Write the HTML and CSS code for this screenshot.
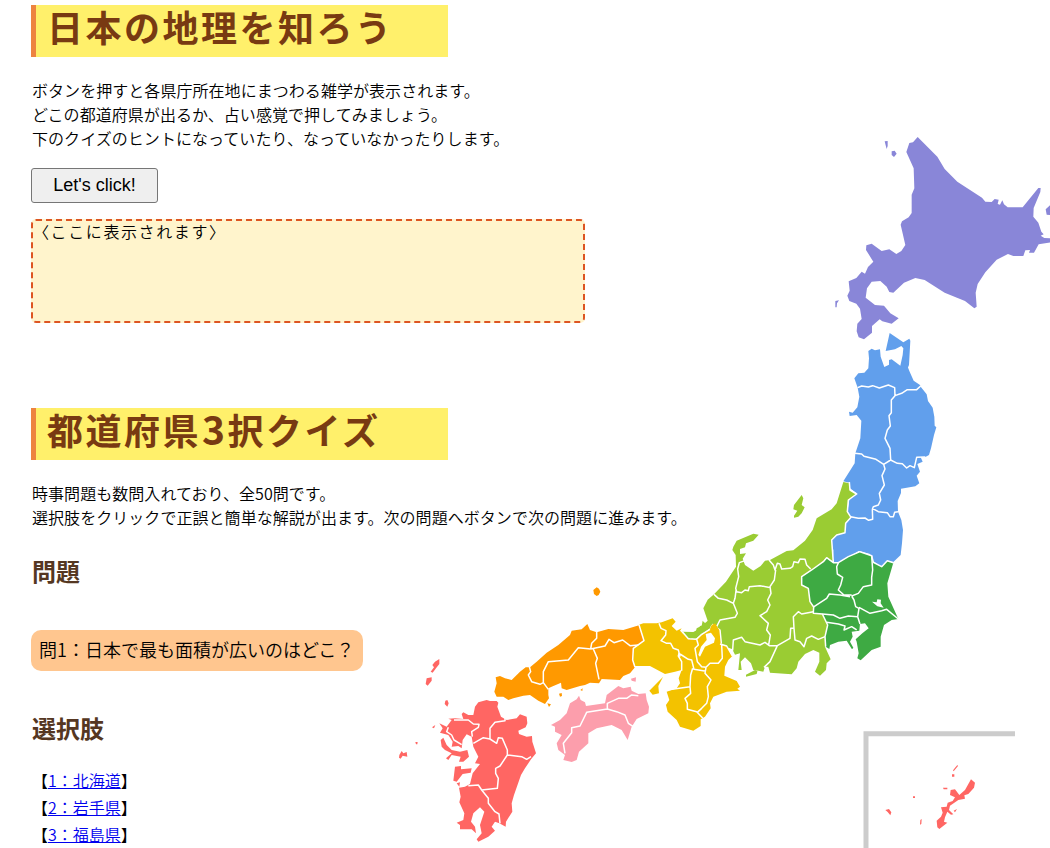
FILE: index.html
```html
<!DOCTYPE html>
<html lang="ja">
<head>
<meta charset="utf-8">
<title>日本の地理を知ろう</title>
<link rel="stylesheet" href="styles.css">
</head>
<body>
<div class="page">
<svg class="map" viewBox="0 0 1050 848" aria-hidden="true">
  <!-- 北海道 -->
  <g class="hokkaido" transform="translate(820 120) scale(.33333)">
    <path d="M293 51L352 110 374 147 412 185 486 233 496 245 515 246 524 237 536 239 533 252 540 254 547 241 552 253 563 262 608 262 655 204 662 204 661 216 641 264 640 290 655 308 664 335 671 343 662 347 673 354 692 355 692 367 656 373 642 398 627 398 630 390 616 391 610 408 580 408 564 402 530 419 496 457 473 492 467 518 470 560 463 565 435 543 374 518 314 480 286 474 252 488 220 518 208 516 200 500 181 483 155 485 141 505 137 533 165 555 192 557 211 580 236 595 215 611 187 604 179 598 156 618 156 638 132 658 116 652 110 634 112 611 125 597 120 566 109 551 88 543 82 527 89 512 86 484 109 474 125 455 135 461 144 441 160 425 138 390 139 376 155 371 185 393 208 388 229 402 244 393 256 375 242 314 246 304 266 292 275 279 275 224 283 205 281 145 259 96 268 69 279 67Z"/>
    <path d="M194 64L203 63 203 78 200 87 197 76ZM215 94L224 92 230 101 222 111 215 105ZM692 254L677 268 680 284 692 285ZM46 543L57 541 51 550 50 562 46 562Z"/>
  </g>
  <!-- 東北 -->
  <g class="tohoku" transform="translate(820 320) scale(.33333)">
    <path d="M209 39L250 67 268 56 271 62 267 135 258 157 258 148 263 140 269 155 281 182 300 195 302 200 320 223 324 243 338 263 343 290 344 317 349 322 342 345 333 385 327 405 316 411 302 412 308 425 292 432 300 455 290 467 298 490 286 499 243 506 243 519 233 543 234 575 244 600 249 630 246 670 242 705 220 726 200 722 184 740 158 722 150 702 116 693 56 729 39 725 40 690 32 670 36 650 72 635 76 612 92 593 82 575 88 540 110 520 90 505 88 488 70 484 104 430 106 400 121 355 124 302 110 285 89 288 87 275 98 278 112 262 118 230 113 203 103 175 115 160 133 158 145 145 147 115 145 93 155 86 165 91 180 88 182 110 193 141 207 134 207 120 215 118 241 137 248 105 250 85 244 78 225 88 197 93Z"/>
    <path class="border" d="M113 203L125 198 145 201 158 197 178 204 205 195 224 203 225 227 245 220 262 209 290 209 302 198M225 227L214 240 214 278 207 287 211 318 202 330 195 355 210 385 212 420 191 433M104 400L125 402 132 409 168 418 191 433M212 420L232 430 247 431 260 444 270 437 283 443 290 412 316 411M191 433L195 447 186 467 193 495 178 520 182 540 175 555 160 560 157 568M157 565L175 575 202 578 210 590 220 590 224 577 234 575M157 568L158 598 146 601 135 594 115 595 92 590"/>
  </g>
  <!-- 中部・関東 -->
  <g transform="translate(690 470) scale(.33333)">
    <path class="chubu" d="M460 36L440 100 425 118 380 145 368 180 345 212 310 241 290 243 240 270 225 272 212 288 190 302 165 285 158 266 168 250 150 252 150 237 165 232 168 220 190 212 206 194 190 191 140 212 130 230 127 240 137 255 138 290 108 335 72 373 53 389 40 415 53 452 45 460 38 452 35 467 20 475 17 487 0 490 0 508 30 495 67 463 90 480 95 525 128 540 135 554 150 550 148 570 145 600 155 600 152 575 165 562 183 580 190 600 203 600 200 612 168 620 168 614 195 600 220 605 225 590 235 590 240 608 305 613 320 595 325 575 345 552 370 540 388 548 388 575 375 605 390 617 408 600 410 580 422 568 405 530 408 500 413 465 397 432 370 430 371 411 360 395 355 355 335 345 335 320 365 300 400 275 410 263 430 275 425 210 440 195 465 188 467 160 483 142 472 125 475 90 500 72 480 60 478 40Z"/>
    <path class="chubu" d="M335 75L340 85 335 105 344 112 335 130 325 140 312 143 312 137 322 122 310 118 312 105Z"/>
    <path class="kanto" d="M410 263L430 278 445 278 475 260 510 245 545 257 550 277 575 290 592 272 610 278 592 340 595 380 625 447 605 450 582 465 572 500 572 530 545 540 512 571 502 565 506 550 500 515 497 508 517 490 536 475 525 460 510 462 508 482 485 485 488 500 480 515 490 533 486 538 470 512 445 515 420 525 418 537 407 530 405 500 413 465 397 432 370 430 371 411 360 395 355 355 335 345 335 320 365 300 400 275Z"/>
    <path class="border" d="M478 36L480 60 500 72 475 90 472 125 483 142 467 160 465 188 440 195 425 210 430 278M407 530L405 500 413 465 397 432 370 430 371 411 360 395 355 355 335 345 335 320 365 300 400 275 410 263 430 278 445 278 475 260 510 245 545 257 550 277 575 290 592 272 610 278"/>
    <path class="border" d="M445 278L440 290 442 312 458 322 452 345 445 360 462 375 485 375M545 257L548 300 545 322 545 345 520 350 505 370 485 378M371 411L410 385 418 372 450 375 480 380M485 378L492 390 497 410 507 415 503 440 510 462M507 412L540 430 575 422 590 418 625 447M397 432L430 435 450 445 475 438 503 440M410 457L445 462 465 468 462 480 485 470 500 480"/>
    <path class="border" d="M237 270L250 285 255 300 262 280 270 282 275 297 300 295 308 290 312 275 325 278 330 267 345 268 350 285 362 297M257 300L253 330 240 350 243 370 233 390 240 405 230 425 210 437 235 460 230 480 241 495 236 525M165 272L148 278 143 297 146 320 137 355 140 365 155 368 165 360 175 362 178 350 210 347 242 353M138 362L135 385 130 400 110 390 85 385 72 373M130 400L142 430 135 442 90 450 80 470 67 463M67 463L90 480 95 530 128 540 130 510 155 502 165 515 210 525 225 517 238 527 262 527M262 527L240 575 222 592M262 527L300 505 302 475 312 475 315 510 330 515 342 530 350 505 365 498 385 508 405 500M312 475L310 440 325 425 335 432 370 425"/>
    <path class="water" d="M546 395L560 397 562 388 573 389 572 400 581 413 562 409Z"/>
  </g>
  <!-- 近畿・中国・四国 -->
  <g transform="translate(480 580) scale(.33333)">
    <path class="chubu" d="M607 155L640 156 658 146 660 138 675 135 672 128 695 130 690 145 665 163 645 178 615 172Z"/>
    <path class="kinki" d="M477 134L490 130 530 130 545 127 578 115 587 125 575 138 590 152 605 145 600 152 625 176 650 178 665 165 690 147 695 135 705 130 718 150 722 190 740 198 757 228 745 240 735 260 733 287 770 303 780 320 772 326 780 332 740 335 700 350 690 370 692 385 675 410 662 418 662 438 640 452 600 440 590 420 563 395 558 375 568 360 560 335 590 325 600 310 596 295 605 270 585 275 555 282 510 258 465 258 458 240 460 205 475 195 492 182ZM549 291L528 312 508 332 518 344 537 340 535 318Z"/>
    <path class="water" d="M677 162L693 158 705 175 702 188 675 200 660 230 655 225 663 200 680 180Z"/>
    <path class="chugoku" d="M477 136L492 182 460 205 458 240 465 262 450 280 430 288 420 300 365 297 357 310 330 308 315 315 300 318 260 330 245 325 243 308 215 320 205 325 205 345 207 355 195 372 175 362 150 345 130 347 100 355 85 360 70 350 50 350 43 335 50 310 47 292 60 288 75 295 95 300 120 275 137 262 150 262 170 245 200 218 235 195 270 165 275 152 305 148 322 132 330 150 350 157 385 147 430 150ZM350 22L357 26 361 35 356 45 350 48 342 42 340 30ZM237 341L245 339 246 348 240 350ZM301 330L308 325 307 333ZM202 370L213 373 207 381Z"/>
    <path class="shikoku" d="M297 347L302 360 315 367 318 378 375 370 380 345 415 318 430 325 452 320 455 332 475 342 497 340 500 360 507 380 505 400 470 417 455 440 443 480 425 450 395 435 350 445 325 460 325 490 297 515 290 540 275 546 250 540 255 525 235 510 230 490 245 465 225 455 225 440 213 435 240 420 260 400 270 370 290 358ZM453 296L468 292 467 305 455 302Z"/>
    <path class="border" d="M537 130L543 145 558 152 557 165 543 182 560 190 572 190 580 205 595 210 600 230M650 178L655 195 645 205 652 245 665 260 678 262M597 220L595 228 605 245 605 272M600 222L625 238 635 240 642 268 678 274M678 262L690 250 715 250 727 235 725 195M638 265L632 285 630 320 560 330M630 320L632 340 615 355 622 370 622 388 650 395 668 414M678 262L675 280 693 300 682 320 685 350 680 370 665 385 652 397M477 134L492 182 460 205 458 240 465 262M607 155L625 176 650 178 665 163 690 148M720 192L740 198 757 228"/>
    <path class="border" d="M350 155L350 175 335 190 332 207M332 207L295 203 265 240 205 245 190 275 190 308 205 328M190 308L180 313 155 305 145 285 152 275 148 260M332 207L375 198 387 178 402 188 428 180 450 197 475 195M340 207L352 235 347 250 357 298"/>
    <path class="border" d="M475 347L455 345 440 355 415 355 382 370 382 387 320 397 300 438 275 443 275 458 250 490 255 520M382 387L410 395 435 405 445 430 460 440"/>
  </g>
  <!-- 九州 -->
  <g class="kyushu" transform="translate(380 640) scale(.33333)">
    <path d="M320 180L330 183 350 183 355 188 352 200 363 230 380 240 410 235 420 223 440 230 442 250 437 262 415 272 417 282 440 290 456 288 457 305 465 330 468 340 453 358 435 385 423 405 402 465 395 490 397 515 378 545 377 560 358 550 345 545 335 560 345 572 325 590 295 605 290 598 305 580 300 555 313 515 300 502 280 520 273 545 285 560 288 580 275 568 240 568 240 555 230 548 250 540 253 520 238 487 242 470 237 443 255 440 270 432 278 400 300 372 285 370 295 350 280 320 275 290 260 283 248 300 245 325 235 318 215 320 218 305 205 285 180 278 188 265 178 250 200 260 215 240 205 236 225 235 250 237 245 222 250 217 265 225 280 225 285 200 295 187Z"/>
    <path d="M182 300L190 293 200 315 215 330 240 335 262 330 267 350 250 365 237 365 242 350 215 345 205 360 198 355 215 340 195 330 185 320ZM225 380L243 378 243 388 275 385 272 398 248 402 230 425 220 422ZM230 430L240 427 238 440ZM178 57L178 72 168 85 158 98 152 95 162 82 157 75 165 65ZM140 115L155 112 155 122 143 137 137 132ZM196 182L202 180 206 190 202 200 194 192ZM58 345L65 333 70 340 80 336 82 350 68 347 62 356 57 353ZM106 306L113 306 112 313 108 313ZM156 262L166 255 162 265Z"/>
    <path class="border" d="M205 262L200 275 215 285 222 300 245 314M222 240L265 240 280 252 297 253 295 262 275 275 277 290M280 310L310 293 330 297 350 310 355 293 367 295 382 330 382 345M330 297L330 265 345 247 375 242 375 230M382 345L425 350 440 358 453 350M382 345L360 378 347 385 347 400 355 415 352 445 305 450M265 437L295 435 305 450 325 475 325 490 345 515 357 522 360 550"/>
  </g>
  <!-- 沖縄 -->
  <g class="kyushu" transform="translate(850 720) scale(.33333)">
    <path class="frame" d="M48 390V41H495"/>
    <path d="M363 178L375 188 372 203 355 222 343 226 345 236 325 240 300 257 297 270 310 283 303 284 292 275 285 292 282 305 292 308 268 327 262 322 260 302 273 290 278 278 273 262 290 260 293 248 308 243 315 232 300 225 302 210 315 208 328 225 345 210ZM322 135L324 138 311 154 309 151ZM306 163H313V170H306ZM279 203H292V208H281ZM189 229H195V234H189ZM106 270L117 267 124 277 121 286 113 276ZM211 300L215 297 214 312 210 314ZM311 272L321 267 315 277Z"/>
  </g>
</svg>
<main class="content">
  <h1 class="heading">日本の地理を知ろう</h1>
  <p class="lead">ボタンを押すと各県庁所在地にまつわる雑学が表示されます。<br>どこの都道府県が出るか、占い感覚で押してみましょう。<br>下のクイズのヒントになっていたり、なっていなかったりします。</p>
  <button class="trivia-button" type="button">Let's click!</button>
  <div class="trivia">〈ここに表示されます〉</div>
  <h1 class="heading heading-quiz">都道府県<span class="numeral">3</span>択クイズ</h1>
  <p class="lead">時事問題も数問入れており、全50問です。<br>選択肢をクリックで正誤と簡単な解説が出ます。次の問題へボタンで次の問題に進みます。</p>
  <h2 class="subheading">問題</h2>
  <p class="question">問1：日本で最も面積が広いのはどこ？</p>
  <h2 class="subheading subheading-choices">選択肢</h2>
  <ul class="choices">
    <li>【<a href="#">1：北海道</a>】</li>
    <li>【<a href="#">2：岩手県</a>】</li>
    <li>【<a href="#">3：福島県</a>】</li>
  </ul>
</main>
</div>
</body>
</html>
```
FILE: styles.css
```css
body {
  margin: 0;
  background: #fff;
  color: #000;
  font: 350 16px/24px "Noto Sans CJK JP", "Noto Sans", sans-serif;
}
.page {
  display: grid;
  grid-template: 848px / 1050px;
  overflow: hidden;
}
.map, .content { grid-area: 1 / 1; }
.map { width: 1050px; height: 848px; }
.hokkaido { fill: #8986d8; }
.tohoku { fill: #619fec; }
.kanto { fill: #3eaa43; }
.chubu { fill: #9acc33; }
.kinki { fill: #f3c200; }
.chugoku { fill: #ff9900; }
.shikoku { fill: #fc9eac; }
.kyushu { fill: #ff6663; }
.water { fill: #fff; }
.border { fill: none; stroke: #fff; stroke-width: 4.5; stroke-linejoin: round; }
.frame { fill: none; stroke: #ccc; stroke-width: 15; }

.content {
  display: flex;
  flex-direction: column;
  align-items: flex-start;
  padding: 5px 0 0 31px;
}
.content > * { flex-shrink: 0; }
.heading {
  box-sizing: border-box;
  width: 417px;
  height: 52px;
  margin: 0;
  padding-left: 11px;
  border-left: 5px solid #ed8440;
  background: #fff06b;
  color: #783a12;
  font-size: 36px;
  font-weight: 700;
  line-height: 43px;
  letter-spacing: 2.5px;
}
.heading-quiz { margin-top: 85px; }
.numeral { padding-left: 1px; font-size: 39px; line-height: 1; }
.lead {
  margin: 21px 0 0;
  padding-left: 1px;
  letter-spacing: .05px;
  white-space: nowrap;
}
.trivia-button {
  width: 127px;
  height: 35px;
  margin: 18px 0 0;
  border: 1px solid #767676;
  border-radius: 3px;
  background: #efefef;
  color: #000;
  font: 400 18px "Liberation Sans", Arial, sans-serif;
}
.trivia {
  box-sizing: border-box;
  width: 554px;
  height: 104px;
  margin-top: 16px;
  border: 2px dashed #dd5522;
  border-radius: 5px;
  background: #fff4cc;
  line-height: 20px;
  letter-spacing: 1.6px;
}
.subheading {
  margin: 24px 0 0;
  padding-left: 1px;
  color: #553722;
  font-size: 24px;
  font-weight: 700;
  line-height: 36px;
}
.question {
  box-sizing: border-box;
  width: 332px;
  height: 41px;
  margin: 41px 0 0;
  padding: 0 8px;
  border-radius: 10px;
  background: #ffc68f;
  font-size: 18px;
  line-height: 38px;
  white-space: nowrap;
}
.subheading-choices { margin-top: 39px; }
.choices {
  margin: 21px 0 0;
  padding: 0 0 0 1px;
  list-style: none;
  line-height: 27px;
}
.choices a { color: #0000ee; }
```
